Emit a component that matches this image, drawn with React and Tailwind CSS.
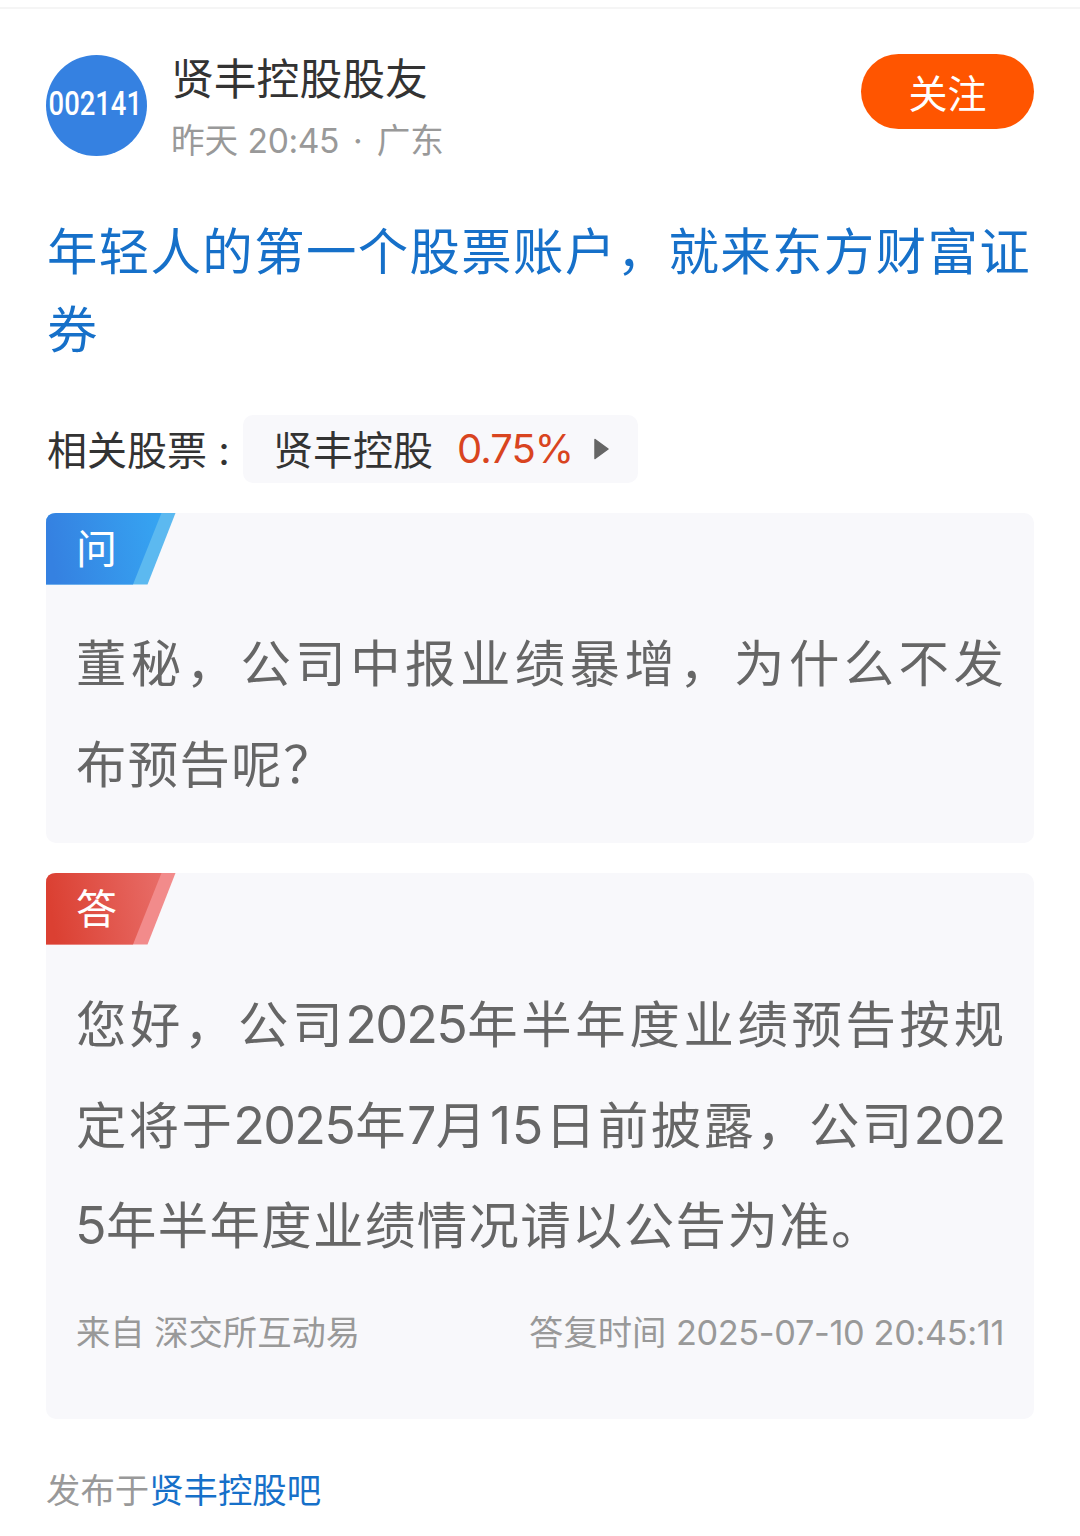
const sans = "font-['Inter','Noto_Sans_CJK_SC',sans-serif]";

function Line({ children, className = "" }) {
  return <div className={`whitespace-nowrap ${className}`}>{children}</div>;
}

function Num({ children }) {
  return <span className="-ml-px mr-px text-[52px] tracking-[-1.7px]">{children}</span>;
}

function Badge({ label, from, to, edge }) {
  return (
    <div className="relative h-[72px] w-[130px]">
      <svg className="absolute inset-0" width="130" height="72" viewBox="0 0 130 72">
        <defs>
          <linearGradient id={`grad-${label}`} x1="0" x2="1" y1="0.1" y2="0">
            <stop offset="0" stopColor={from} />
            <stop offset="1" stopColor={to} />
          </linearGradient>
        </defs>
        <path d="M10 0H129.500L101.500 71.500H0V10Q0 0 10 0Z" fill={edge} />
        <path d="M10 0H115.500L87 71.500H0V10Q0 0 10 0Z" fill={`url(#grad-${label})`} />
      </svg>
      <span className="relative block pl-[30px] text-[41px] leading-[72px] text-white">{label}</span>
    </div>
  );
}

export default function App() {
  return (
    <div className={`h-[1536px] w-[1080px] overflow-hidden bg-white px-[46px] ${sans}`}>
      <div className="-mx-[46px] h-[9px] border-b-2 border-[#f5f5f5]" />
      <header className="flex h-[147px] items-start pt-[45px]">
        <div className="mt-[0.5px] flex size-[101px] items-center justify-center rounded-full bg-[#3581e1] pr-[2px] pb-[3px] font-['Roboto',sans-serif] text-[33px] text-white">
          <span className="scale-x-[0.83] font-medium">002141</span>
        </div>
        <div className="ml-6 flex-1">
          <Line className="pt-px text-[42.8px] leading-[50px] text-[#333]">贤丰控股股友</Line>
          <Line className="mt-3 text-[33.6px] leading-[48px] text-[#999]">
            昨天 <span className="tracking-[-0.4px]">20:45</span><span className="mx-[4.5px]"> · </span>广东
          </Line>
        </div>
        <button className="h-[75px] w-[173px] rounded-full bg-[#ff5500] pt-[5px] text-[39px] text-white">关注</button>
      </header>
      <h1 className="mt-[57px] ml-px text-[50.4px] leading-[78px] tracking-[1.4px] text-[#1670c9]">
        <Line>年轻人的第一个股票账户，就来东方财富证</Line>
        <Line>券</Line>
      </h1>
      <div className="mt-[46px] flex h-[68px] items-center text-[40px] text-[#333]">
        <Line className="w-[197px] pt-[3px] pl-px">相关股票 :</Line>
        <div className="flex h-[68px] w-[395px] items-center rounded-[10px] bg-[#f8f8fb] pl-[30px]">
          <span className="pt-[3px]">贤丰控股</span>
          <span className="ml-6 w-[114px] tracking-[-1px] text-[#d9441f]">0.75%</span>
          <svg className="ml-[23px]" width="15" height="22" viewBox="0 0 15 22">
            <path d="M1 1.500L14 11L1 20.500Z" fill="#666" stroke="#666" strokeWidth="1.5" strokeLinejoin="round" />
          </svg>
        </div>
      </div>
      <section className="mt-[30px] h-[330px] rounded-[10px] bg-[#f8f8fb] text-[50.4px] leading-[101px] text-[#666]">
        <Badge label="问" from="#3581e1" to="#36a5f2" edge="#5cb9f0" />
        <div className="px-[30px] pt-[28px]">
          <Line className="tracking-[4.45px]">董秘，公司中报业绩暴增，为什么不发</Line>
          <Line className="tracking-[1.4px]">布预告呢？</Line>
        </div>
      </section>
      <section className="mt-[30px] h-[546px] rounded-[10px] bg-[#f8f8fb] text-[50.4px] leading-[100.5px] text-[#666]">
        <Badge label="答" from="#db4032" to="#e86d68" edge="#f28b8b" />
        <div className="px-[30px] pt-[30px]">
          <Line className="tracking-[3.65px]">您好，公司<Num>2025</Num>年半年度业绩预告按规</Line>
          <Line className="tracking-[2.35px]">定将于<Num>2025</Num>年<Num>7</Num>月<span className="mx-[1.5px] text-[52px] tracking-[0.5px]">15</span>日前披露，公司<Num>202</Num></Line>
          <Line className="tracking-[1.4px]"><Num>5</Num>年半年度业绩情况请以公告为准。</Line>
          <div className="mt-[31px] flex justify-between text-[34.300px] leading-[50px] text-[#999]">
            <Line>来自 深交所互动易</Line>
            <Line>答复时间 <span className="tracking-[-0.35px]">2025-07-10 20:45:11</span></Line>
          </div>
        </div>
      </section>
      <footer className="mt-[47px] text-[34.4px] leading-[50px] text-[#999]">
        发布于<span className="text-[#1670c9]">贤丰控股吧</span>
      </footer>
    </div>
  );
}
